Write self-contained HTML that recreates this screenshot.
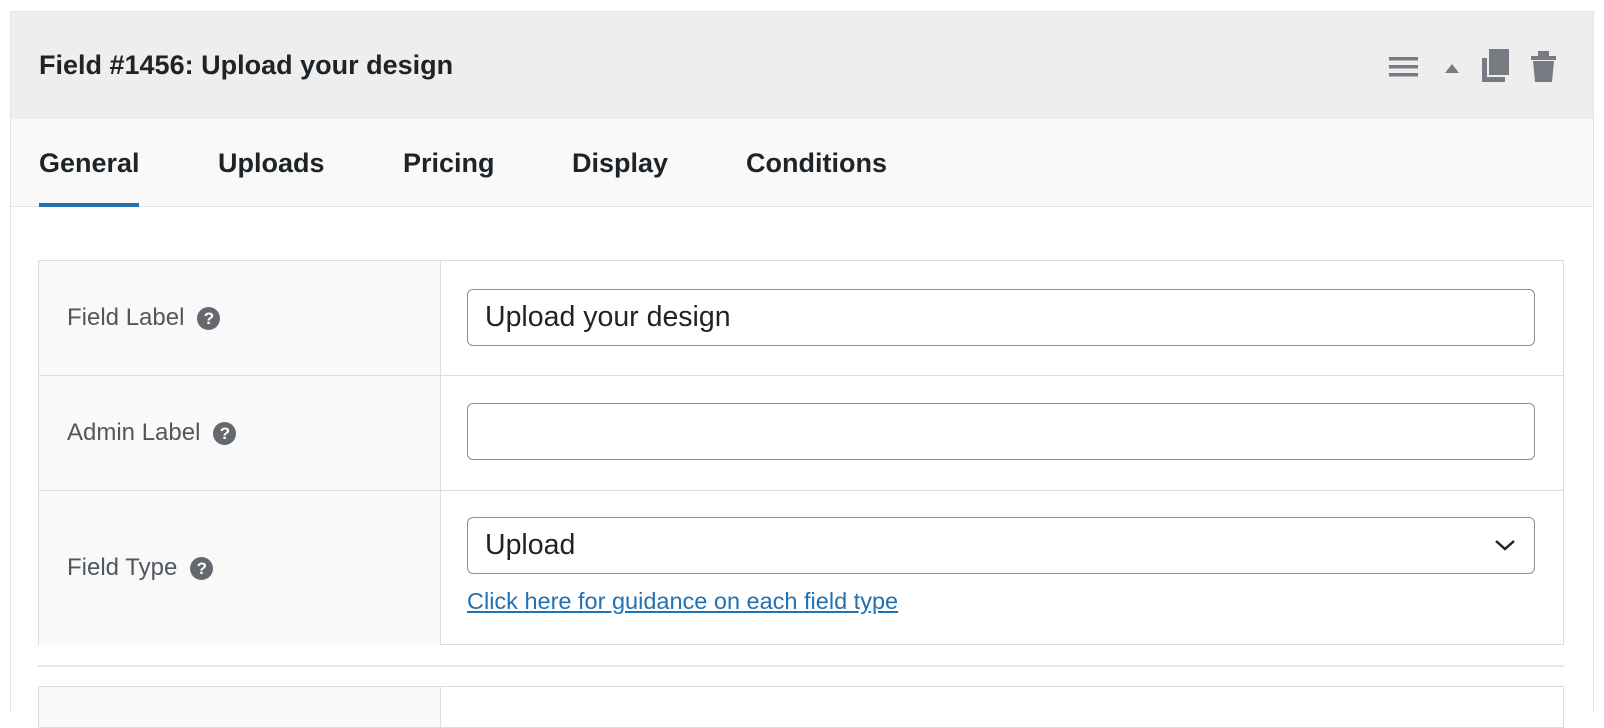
<!DOCTYPE html>
<html><head><style>
body{margin:0;background:#fff;width:1604px;height:690px;overflow:hidden;font-family:"Liberation Sans",Arial,sans-serif;position:relative}
.panel{position:absolute;left:10px;top:11px;width:1582px;height:700px;border:1px solid #e2e4e7;border-bottom:none;background:#fff}
.hdr{position:absolute;left:0;top:0;right:0;height:107px;background:#eeeeee}
.hdr .t{position:absolute;left:28px;top:38px;font-size:27px;font-weight:bold;color:#1d2327}
.tabs{position:absolute;left:0;top:107px;right:0;height:87px;background:#f9f9f9;border-bottom:1px solid #e2e4e7}
.tab{position:absolute;top:29px;font-size:27px;font-weight:bold;color:#1d2327}
.ul{position:absolute;left:28px;top:84px;width:100px;height:4px;background:#2271b1}
.tbl{position:absolute;left:38px;width:1524px;border:1px solid #dcdcde}
.row{position:absolute;left:0;right:0;border-top:1px solid #dcdcde}
.lab{position:absolute;left:0;top:0;bottom:0;width:401px;background:#f9f9f9;border-right:1px solid #dcdcde}
.lab span{position:absolute;left:28px;font-size:24px;color:#50575e;display:flex;align-items:center;height:30px}
.q{display:inline-block;width:23px;height:23px;border-radius:50%;background:#646970;color:#fff;font-size:17px;font-weight:bold;font-style:normal;text-align:center;line-height:23px;margin-left:13px}
.inp{position:absolute;left:428px;width:1066px;height:55px;border:1px solid #8c8f94;border-radius:6px;background:#fff;font-size:28.5px;color:#1d2327;line-height:55px;text-indent:17px}
a{position:absolute;left:428px;font-size:23.5px;color:#2271b1;text-decoration:underline}
svg.i{position:absolute;left:0;top:0}
</style></head><body>
<div class="panel">
 <div class="hdr"><div class="t">Field #1456: Upload your design</div></div>
 <div class="tabs">
  <div class="tab" style="left:28px">General</div>
  <div class="tab" style="left:207px">Uploads</div>
  <div class="tab" style="left:392px">Pricing</div>
  <div class="tab" style="left:561px">Display</div>
  <div class="tab" style="left:735px">Conditions</div>
  <div class="ul"></div>
 </div>
</div>
<svg class="i" width="1604" height="100">
  <rect x="1389" y="57" width="29" height="3.5" fill="#787c82"/><rect x="1389" y="65" width="29" height="3.5" fill="#787c82"/><rect x="1389" y="73" width="29" height="3.5" fill="#787c82"/>
  <polygon points="1445,73 1452,64 1459,73" fill="#787c82"/>
  <path d="M1482 58h5v19h18v5h-23z" fill="#787c82"/><rect x="1489" y="49" width="20" height="26" fill="#787c82"/>
  <path d="M1531 56h25v4h-25z M1538 51h11v5h-11z M1533 61h21l-2 21h-17z" fill="#787c82"/>
</svg>
<div class="tbl" style="top:260px;height:383px">
 <div class="row" style="top:0;height:114px;border-top:none"><div class="lab"><span style="top:42px">Field Label<i class="q">?</i></span></div><div class="inp" style="top:28px">Upload your design</div></div>
 <div class="row" style="top:114px;height:114px"><div class="lab"><span style="top:42px">Admin Label<i class="q">?</i></span></div><div class="inp" style="top:27px"></div></div>
 <div class="row" style="top:229px;height:154px"><div class="lab"><span style="top:62px">Field Type<i class="q">?</i></span></div><div class="inp" style="top:26px">Upload
  <svg style="position:absolute;right:18px;top:20px" width="22" height="14"><path d="M2 3l9 8 9-8" stroke="#1d2327" stroke-width="2.5" fill="none"/></svg></div>
  <a style="top:97px">Click here for guidance on each field type</a></div>
</div>
<div style="position:absolute;left:38px;top:665px;width:1526px;height:2px;background:#e8e8e8"></div>
<div class="tbl" style="top:686px;height:40px"><div class="lab"></div></div>
</body></html>
